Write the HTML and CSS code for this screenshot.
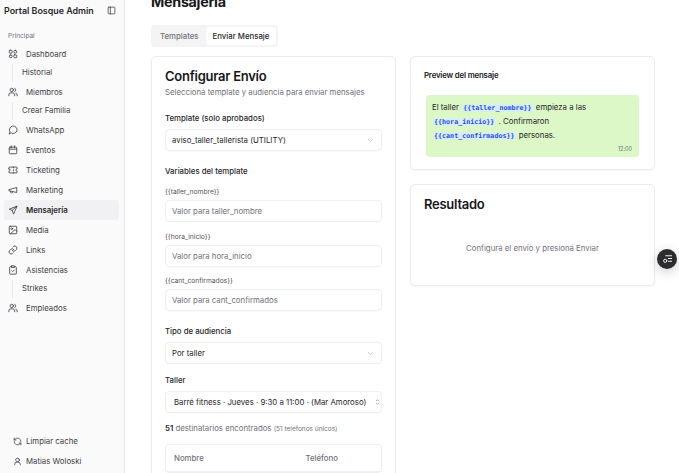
FILE: index.html
```html
<!DOCTYPE html>
<html lang="es">
<head>
	<meta charset="UTF-8">
	<title>Portal Bosque Admin</title>
	<link rel="stylesheet" href="styles.css">
</head>
<body>
	<aside class="sidebar">
		<div class="brand">
			<span class="brand-name">Portal Bosque Admin</span>
			<svg class="icon" viewBox="0 0 24 24"><rect x="3" y="3" width="18" height="18" rx="2"/><path d="M9 3v18"/></svg>
		</div>
		<div class="group-label">Principal</div>
		<nav class="nav">
			<a class="nav-item"><svg class="icon" viewBox="0 0 24 24"><rect x="3" y="3" width="7" height="7" rx="2"/><rect x="14" y="3" width="7" height="7" rx="3.5"/><rect x="3" y="14" width="7" height="7" rx="3.5"/><rect x="14" y="14" width="7" height="7" rx="2"/></svg>Dashboard</a>
			<a class="nav-sub">Historial</a>
			<a class="nav-item"><svg class="icon" viewBox="0 0 24 24"><circle cx="9" cy="7" r="4"/><path d="M2 21v-2a5 5 0 0 1 5-5h4a5 5 0 0 1 5 5v2"/><path d="M16 3.200a4 4 0 0 1 0 7.600"/><path d="M22 21v-2a4 4 0 0 0-3-3.900"/></svg>Miembros</a>
			<a class="nav-sub">Crear Familia</a>
			<a class="nav-item"><svg class="icon" viewBox="0 0 24 24"><path d="M3 21l1.700-5A9 9 0 1 1 8 19.300z"/></svg>WhatsApp</a>
			<a class="nav-item"><svg class="icon" viewBox="0 0 24 24"><rect x="3" y="5" width="18" height="16" rx="2"/><path d="M8 2v5M16 2v5M3 10h18"/></svg>Eventos</a>
			<a class="nav-item"><svg class="icon" viewBox="0 0 24 24"><path d="M2 9V7a2 2 0 0 1 2-2h16a2 2 0 0 1 2 2v2a3 3 0 0 0 0 6v2a2 2 0 0 1-2 2H4a2 2 0 0 1-2-2v-2a3 3 0 0 0 0-6z"/><path d="M13 5v2M13 11v2M13 17v2"/></svg>Ticketing</a>
			<a class="nav-item"><svg class="icon" viewBox="0 0 24 24"><path d="M3 11l18-5v12L3 14z"/><path d="M11.600 16.800a3 3 0 1 1-5.800-1.600"/></svg>Marketing</a>
			<a class="nav-item nav-item-active"><svg class="icon" viewBox="0 0 24 24"><path d="M21 3L3 10l7 3 3 8z"/><path d="M21 3L10 13"/></svg>Mensajería</a>
			<a class="nav-item"><svg class="icon" viewBox="0 0 24 24"><rect x="3" y="3" width="18" height="18" rx="2"/><circle cx="9" cy="9" r="2"/><path d="M21 15l-4-4L6 21"/></svg>Media</a>
			<a class="nav-item"><svg class="icon" viewBox="0 0 24 24"><path d="M10 13a5 5 0 0 0 7.500.5l3-3a5 5 0 0 0-7-7l-1.700 1.700"/><path d="M14 11a5 5 0 0 0-7.500-.5l-3 3a5 5 0 0 0 7 7l1.700-1.700"/></svg>Links</a>
			<a class="nav-item"><svg class="icon" viewBox="0 0 24 24"><rect x="8" y="2" width="8" height="4" rx="1"/><path d="M16 4h2a2 2 0 0 1 2 2v14a2 2 0 0 1-2 2H6a2 2 0 0 1-2-2V6a2 2 0 0 1 2-2h2"/><path d="M9 14l2 2 4-4"/></svg>Asistencias</a>
			<a class="nav-sub">Strikes</a>
			<a class="nav-item"><svg class="icon" viewBox="0 0 24 24"><circle cx="9" cy="7" r="4"/><path d="M2 21v-2a5 5 0 0 1 5-5h4a5 5 0 0 1 5 5v2"/><path d="M16 3.200a4 4 0 0 1 0 7.600"/><path d="M22 21v-2a4 4 0 0 0-3-3.900"/></svg>Empleados</a>
		</nav>
		<div class="sidebar-foot">
			<a class="nav-item"><svg class="icon" viewBox="0 0 24 24"><path d="M21 12a9 9 0 0 0-15.500-6.200L3 8"/><path d="M3 3v5h5"/><path d="M3 12a9 9 0 0 0 15.500 6.200L21 16"/><path d="M16 16h5v5"/></svg>Limpiar cache</a>
			<a class="nav-item"><svg class="icon" viewBox="0 0 24 24"><circle cx="12" cy="8" r="5"/><path d="M20 21a8 8 0 0 0-16 0"/></svg>Matias Woloski</a>
		</div>
	</aside>

	<main class="main">
		<h1 class="page-title">Mensajería</h1>
		<div class="tabs">
			<span class="tab">Templates</span>
			<span class="tab tab-active">Enviar Mensaje</span>
		</div>
		<div class="columns">
			<section class="card card-form">
				<h2 class="card-title">Configurar Envío</h2>
				<p class="card-desc">Seleccioná template y audiencia para enviar mensajes</p>

				<div class="label label-first">Template (solo aprobados)</div>
				<div class="field">aviso_taller_tallerista (UTILITY)<svg class="chevron" viewBox="0 0 24 24"><path d="M6 9l6 6 6-6"/></svg></div>

				<div class="label label-vars">Variables del template</div>
				<div class="var-label">{{taller_nombre}}</div>
				<div class="field field-empty">Valor para taller_nombre</div>
				<div class="var-label">{{hora_inicio}}</div>
				<div class="field field-empty">Valor para hora_inicio</div>
				<div class="var-label">{{cant_confirmados}}</div>
				<div class="field field-empty">Valor para cant_confirmados</div>

				<div class="label label-vars">Tipo de audiencia</div>
				<div class="field">Por taller<svg class="chevron" viewBox="0 0 24 24"><path d="M6 9l6 6 6-6"/></svg></div>

				<div class="label label-taller">Taller</div>
				<div class="field field-native">Barré fitness · Jueves · 9:30 a 11:00 · (Mar Amoroso)<svg class="updown" viewBox="0 0 24 24"><path d="M7 9l5-5 5 5M7 15l5 5 5-5"/></svg></div>

				<p class="count"><b>51</b> destinatarios encontrados <small>(51 teléfonos únicos)</small></p>

				<div class="table">
					<div class="table-head">
						<span class="col-name">Nombre</span>
						<span>Teléfono</span>
					</div>
				</div>
			</section>

			<div class="side-col">
				<section class="card card-preview">
					<h3 class="preview-title">Preview del mensaje</h3>
					<div class="bubble">
						<p class="bubble-text">El taller <code>{{taller_nombre}}</code> empieza a las <code>{{hora_inicio}}</code> . Confirmaron <code>{{cant_confirmados}}</code> personas.</p>
						<div class="bubble-time">12:00</div>
					</div>
				</section>
				<section class="card card-result">
					<h2 class="card-title">Resultado</h2>
					<p class="result-empty">Configurá el envío y presioná Enviar</p>
				</section>
			</div>
		</div>
	</main>

	<button class="fab"><svg viewBox="0 0 24 24"><path d="M8 6h13M14 12h7M14 18h7"/><circle cx="7" cy="17" r="3.500"/></svg></button>
</body>
</html>
```

FILE: styles.css
```css
*{margin: 0;padding: 0;box-sizing: border-box;}
html,body{height: 100%;overflow: hidden;}
body{
	display: flex;
	background-color: #fff;
	font-family: "Inter", "Liberation Sans", sans-serif;
	color: #18181b;
}
.icon{
	width: 10px;
	height: 10px;
	flex: none;
	fill: none;
	stroke: #3f3f46;
	stroke-width: 2;
	stroke-linecap: round;
	stroke-linejoin: round;
}

/* sidebar */
.sidebar{
	width: 125px;
	flex: none;
	display: flex;
	flex-direction: column;
	background-color: #fafafa;
	border-right: 1px solid #e8e8ea;
	padding: 0 5px 0 4px;
}
.brand{
	display: flex;
	align-items: center;
	justify-content: space-between;
	height: 20px;
	font-size: 8.900px;
	font-weight: 600;
	color: #27272a;
	padding-right: 3px;
	white-space: nowrap;
}
.brand .icon{width: 9px;height: 9px;}
.group-label{
	font-size: 6.500px;
	color: #71717a;
	margin-top: 9px;
	padding-left: 4px;
	height: 14px;
	line-height: 14px;
}
.nav{
	display: flex;
	flex-direction: column;
	margin-top: 1px;
}
.nav-item{
	display: flex;
	align-items: center;
	gap: 8px;
	height: 20px;
	padding-left: 4px;
	border-radius: 3px;
	font-size: 7.800px;
	color: #3f3f46;
	white-space: nowrap;
}
.nav-item-active{
	background-color: #f1f1f3;
	font-weight: 600;
	color: #27272a;
}
.nav-sub{
	height: 18px;
	line-height: 16px;
	margin-left: 8px;
	padding-left: 9px;
	border-left: 1px solid #e8e8ea;
	font-size: 7.800px;
	color: #3f3f46;
}
.sidebar-foot{
	margin-top: auto;
	padding-bottom: 2px;
}
.sidebar-foot .nav-item{
	padding-left: 9px;
	gap: 4px;
}
.sidebar-foot .icon{width: 9px;height: 9px;}

/* main */
.main{
	flex: 1;
	min-width: 0;
	padding: 0 24px 0 26px;
}
.page-title{
	font-size: 14.300px;
	font-weight: 700;
	letter-spacing: -0.02em;
	line-height: 18px;
	margin-top: -7px;
	color: #18181b;
}
.tabs{
	display: flex;
	width: fit-content;
	align-items: center;
	height: 22px;
	margin-top: 14px;
	padding: 2px 1.500px 2px 2px;
	border-radius: 4px;
	background-color: #f4f4f5;
	font-size: 7.800px;
	font-weight: 500;
}
.tab{
	padding: 0 7px;
	line-height: 18px;
	color: #71717a;
}
.tab-active{
	background-color: #fff;
	color: #27272a;
	border-radius: 3px;
}
.columns{
	display: grid;
	grid-template-columns: 245px 245px;
	gap: 14px;
	margin-top: 9px;
	align-items: start;
}
.card{
	background-color: #fff;
	border: 1px solid #ececee;
	border-radius: 5px;
	box-shadow: 0 1px 2px rgba(0,0,0,0.04);
}
.card-form{
	padding: 11px 13px;
	height: 460px;
}
.card-title{
	font-size: 13px;
	font-weight: 600;
	letter-spacing: -0.02em;
	line-height: 17px;
	color: #18181b;
}
.card-desc{
	font-size: 7.800px;
	line-height: 11px;
	margin-top: 2px;
	color: #71717a;
}
.label{
	font-size: 7.800px;
	font-weight: 500;
	line-height: 12px;
	color: #27272a;
}
.label-first{margin-top: 14px;}
.label-vars{margin-top: 14px;}
.label-taller{margin-top: 10px;}
.field{
	display: flex;
	align-items: center;
	justify-content: space-between;
	height: 22px;
	margin-top: 5px;
	padding: 0 6px;
	border: 1px solid #efeff1;
	border-radius: 4px;
	font-size: 7.800px;
	color: #27272a;
	box-shadow: 0 1px 1px rgba(0,0,0,0.02);
}
.field-empty{color: #71717a;}
.field-native{padding: 0 0 0 8px;white-space: nowrap;}
.var-label{
	font-size: 6.700px;
	line-height: 10px;
	margin-top: 9.700px;
	color: #52525b;
}
.label-vars + .var-label{margin-top: 10px;}
.var-label + .field{margin-top: 3px;}
.chevron{
	width: 9px;
	height: 9px;
	fill: none;
	stroke: #a1a1aa;
	stroke-width: 1.500;
	stroke-linecap: round;
	stroke-linejoin: round;
}
.updown{
	width: 7px;
	height: 8px;
	flex: none;
	fill: none;
	stroke: #71717a;
	stroke-width: 2;
}
.count{
	font-size: 7.800px;
	line-height: 12px;
	margin-top: 9px;
	color: #71717a;
}
.count b{font-weight: 600;color: #27272a;}
.count small{font-size: 6.500px;}
.table{
	margin-top: 8.500px;
	border: 1px solid #efeff1;
	border-radius: 4px;
}
.table-head{
	display: flex;
	align-items: center;
	height: 27px;
	padding: 0 8px;
	border-bottom: 1px solid #efeff1;
	font-size: 7.800px;
	font-weight: 500;
	color: #71717a;
}
.col-name{width: 131.500px;}

/* right column */
.side-col{
	display: flex;
	flex-direction: column;
	gap: 14px;
}
.card-preview{
	height: 114px;
	padding: 13px;
}
.preview-title{
	font-size: 7.800px;
	font-weight: 600;
	letter-spacing: -0.02em;
	line-height: 11px;
	color: #18181b;
}
.bubble{
	height: 62px;
	margin: 14px 2px 0 2px;
	padding: 5.500px 7px 0 6px;
	border-radius: 4px;
	background-color: #dcf8c6;
}
.bubble-text{
	padding-right: 14px;
	font-size: 7.800px;
	line-height: 13px;
	color: #27272a;
}
.bubble-text code{
	font-family: "DejaVu Sans Mono", "Liberation Mono", monospace;
	font-size: 6.700px;
	font-weight: 700;
	color: #2b50d8;
	background-color: #d6eefa;
	border-radius: 2px;
	padding: 0 1px;
	margin: 0 1px;
}
.bubble-time{
	font-size: 5.500px;
	line-height: 8px;
	text-align: right;
	margin-top: 2px;
	color: #71717a;
}
.card-result{
	height: 102px;
	padding: 11px 13px;
}
.result-empty{
	margin-top: 29.500px;
	text-align: center;
	font-size: 7.800px;
	line-height: 11px;
	color: #71717a;
}

/* floating button over the page */
.fab{
	position: fixed;
	left: 657px;
	top: 248.500px;
	width: 20px;
	height: 20px;
	display: flex;
	align-items: center;
	justify-content: center;
	border: none;
	border-radius: 50%;
	background-color: #2d2d30;
	box-shadow: 0 3px 12px rgba(0,0,0,0.2);
}
.fab svg{
	width: 11px;
	height: 11px;
	fill: none;
	stroke: #fff;
	stroke-width: 2;
	stroke-linecap: round;
}
```
